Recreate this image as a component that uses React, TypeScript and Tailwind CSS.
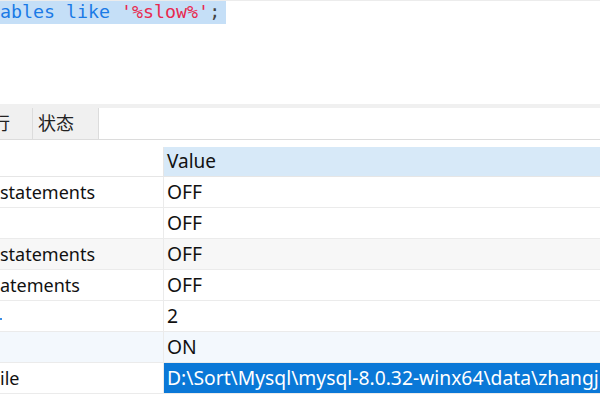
import React from "react";

const rows: { left: React.ReactNode; value: string; bg: string; sel?: boolean }[] = [
  { left: "statements", value: "OFF", bg: "bg-white" },
  { left: "", value: "OFF", bg: "bg-white" },
  { left: "statements", value: "OFF", bg: "bg-[#f7f7f7]" },
  { left: "atements", value: "OFF", bg: "bg-white" },
  { left: <span className="inline-block w-[2px] h-[2px] bg-[#3a8ee6] mt-[6px]" />, value: "2", bg: "bg-white" },
  { left: "", value: "ON", bg: "bg-[#f3f8fd]" },
  { left: "ile", value: "D:\\Sort\\Mysql\\mysql-8.0.32-winx64\\data\\zhangj", bg: "bg-white", sel: true },
];

export default function App() {
  return (
    <div
      className="w-[600px] h-[400px] overflow-hidden bg-white relative"
      style={{ fontFamily: '"Noto Sans", "Noto Sans CJK SC", sans-serif' }}
    >
      <div className="h-px bg-[#ececec]" />
      <div className="h-[23px] flex items-center">
        <div
          className="h-[23px] w-[226px] bg-[#c5dff7] flex items-center whitespace-pre text-[18.3px] leading-none"
          style={{ fontFamily: '"DejaVu Sans Mono", monospace' }}
        >
          <span className="text-[#1a7ae6]">ables like </span>
          <span className="text-[#e8294f]">'%slow%'</span>
          <span className="text-[#444]">;</span>
        </div>
      </div>
      <div className="h-[80px]" />
      <div className="h-[4px] bg-[#f0f0f0]" />
      <div className="h-[32px] flex border-b border-[#dcdcdc]">
        <div className="w-[33px] bg-[#f0f0f0] border-r border-[#dcdcdc] flex items-center overflow-hidden">
          <span className="text-[18px] text-[#222] -ml-[8px]">行</span>
        </div>
        <div className="w-[66px] bg-[#f0f0f0] border-r border-[#dcdcdc] flex items-center pl-[5px]">
          <span className="text-[18px] text-[#222]">状态</span>
        </div>
        <div className="flex-1 bg-white" />
      </div>
      <div className="h-[7px]" />
      <div className="flex h-[30px] border-b border-[#e6e6e6]">
        <div className="w-[164px] border-r border-[#e6e6e6] bg-white" />
        <div className="flex-1 bg-[#d7e9f8] flex items-center pl-[3px] text-[19px] text-[#111]">Value</div>
      </div>
      {rows.map((r, i) => (
        <div key={i} className={`flex h-[31px] border-b border-[#ebebeb] ${r.bg}`}>
          <div className="w-[164px] border-r border-[#ebebeb] flex items-center text-[18px] text-[#111] whitespace-nowrap overflow-hidden">
            {r.left}
          </div>
          <div
            className={`flex-1 flex items-center pl-[3px] text-[19.3px] whitespace-nowrap overflow-hidden ${
              r.sel ? "bg-[#0a78d7] text-white" : "text-[#111]"
            }`}
          >
            {r.value}
          </div>
        </div>
      ))}
    </div>
  );
}
